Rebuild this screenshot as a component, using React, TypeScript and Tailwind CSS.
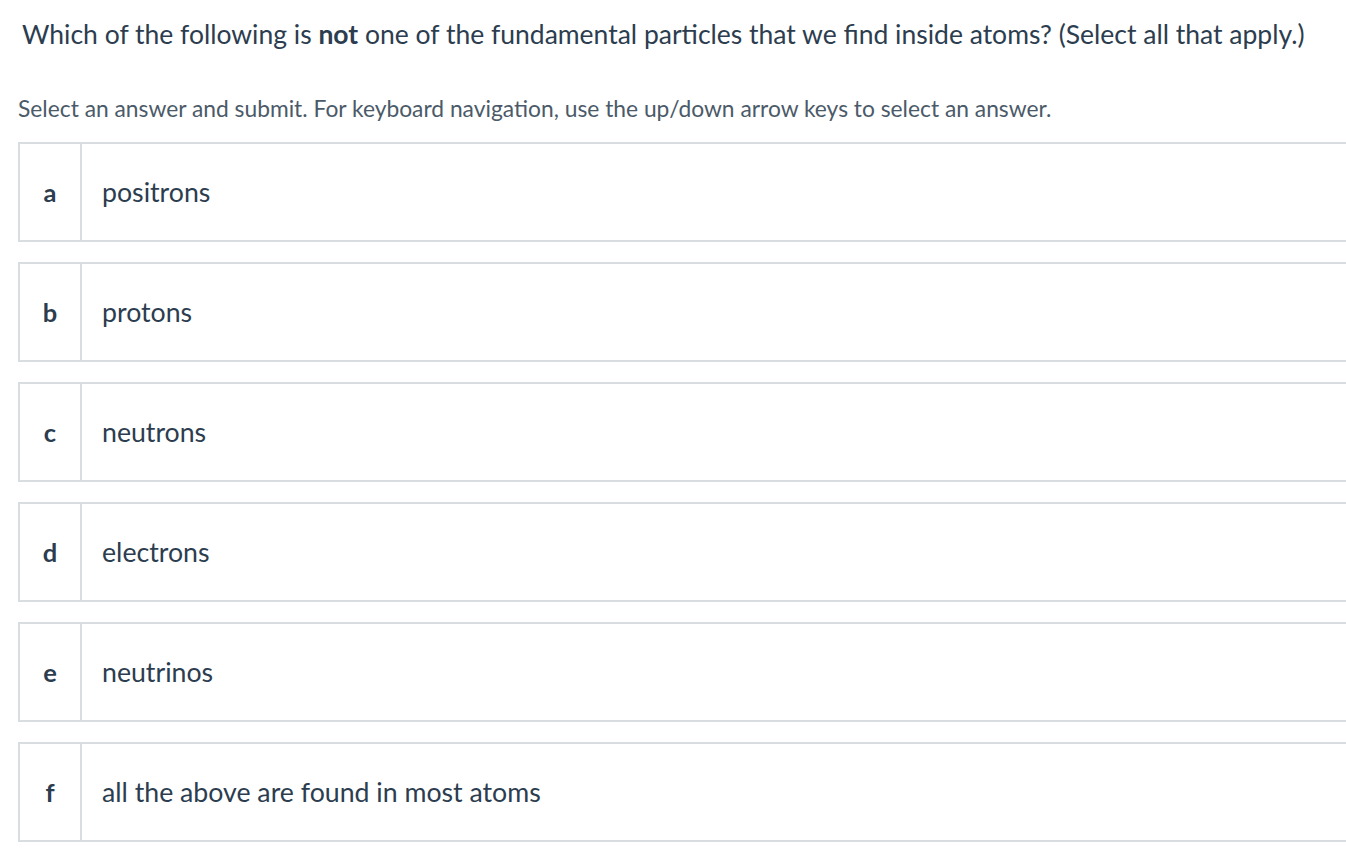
const options = [
  { key: 'a', label: 'positrons' },
  { key: 'b', label: 'protons' },
  { key: 'c', label: 'neutrons' },
  { key: 'd', label: 'electrons' },
  { key: 'e', label: 'neutrinos' },
  { key: 'f', label: 'all the above are found in most atoms' },
]

export default function App() {
  return (
    <div className="min-h-screen bg-white text-[#2c3e50]" style={{ fontFamily: 'Lato, "Noto Sans", sans-serif' }}>
      <div className="pl-[18px] pt-[16px]">
        <h1 className="pl-[4px] text-[26.5px] leading-[36px] font-normal text-[#2c3d4f]">
          Which of the following is <strong className="font-bold">not</strong> one of the fundamental particles that we find inside atoms? (Select all that apply.)
        </h1>
        <p className="mt-[41px] text-[22.8px] leading-[30px] text-[#4b5a68]">
          Select an answer and submit. For keyboard navigation, use the up/down arrow keys to select an answer.
        </p>
        <ul className="mt-[19px] flex flex-col gap-[20px]">
          {options.map((o) => (
            <li
              key={o.key}
              className="flex h-[100px] border-2 border-r-0 border-[#d9dde2] cursor-pointer"
            >
              <div className="flex w-[62px] shrink-0 items-center justify-center border-r-2 border-[#d9dde2] text-[25.5px] font-bold text-[#2c3d4f]">
                {o.key}
              </div>
              <div className="flex items-center pl-[20px] text-[26.7px] text-[#2c3d4f]">
                {o.label}
              </div>
            </li>
          ))}
        </ul>
      </div>
    </div>
  )
}
